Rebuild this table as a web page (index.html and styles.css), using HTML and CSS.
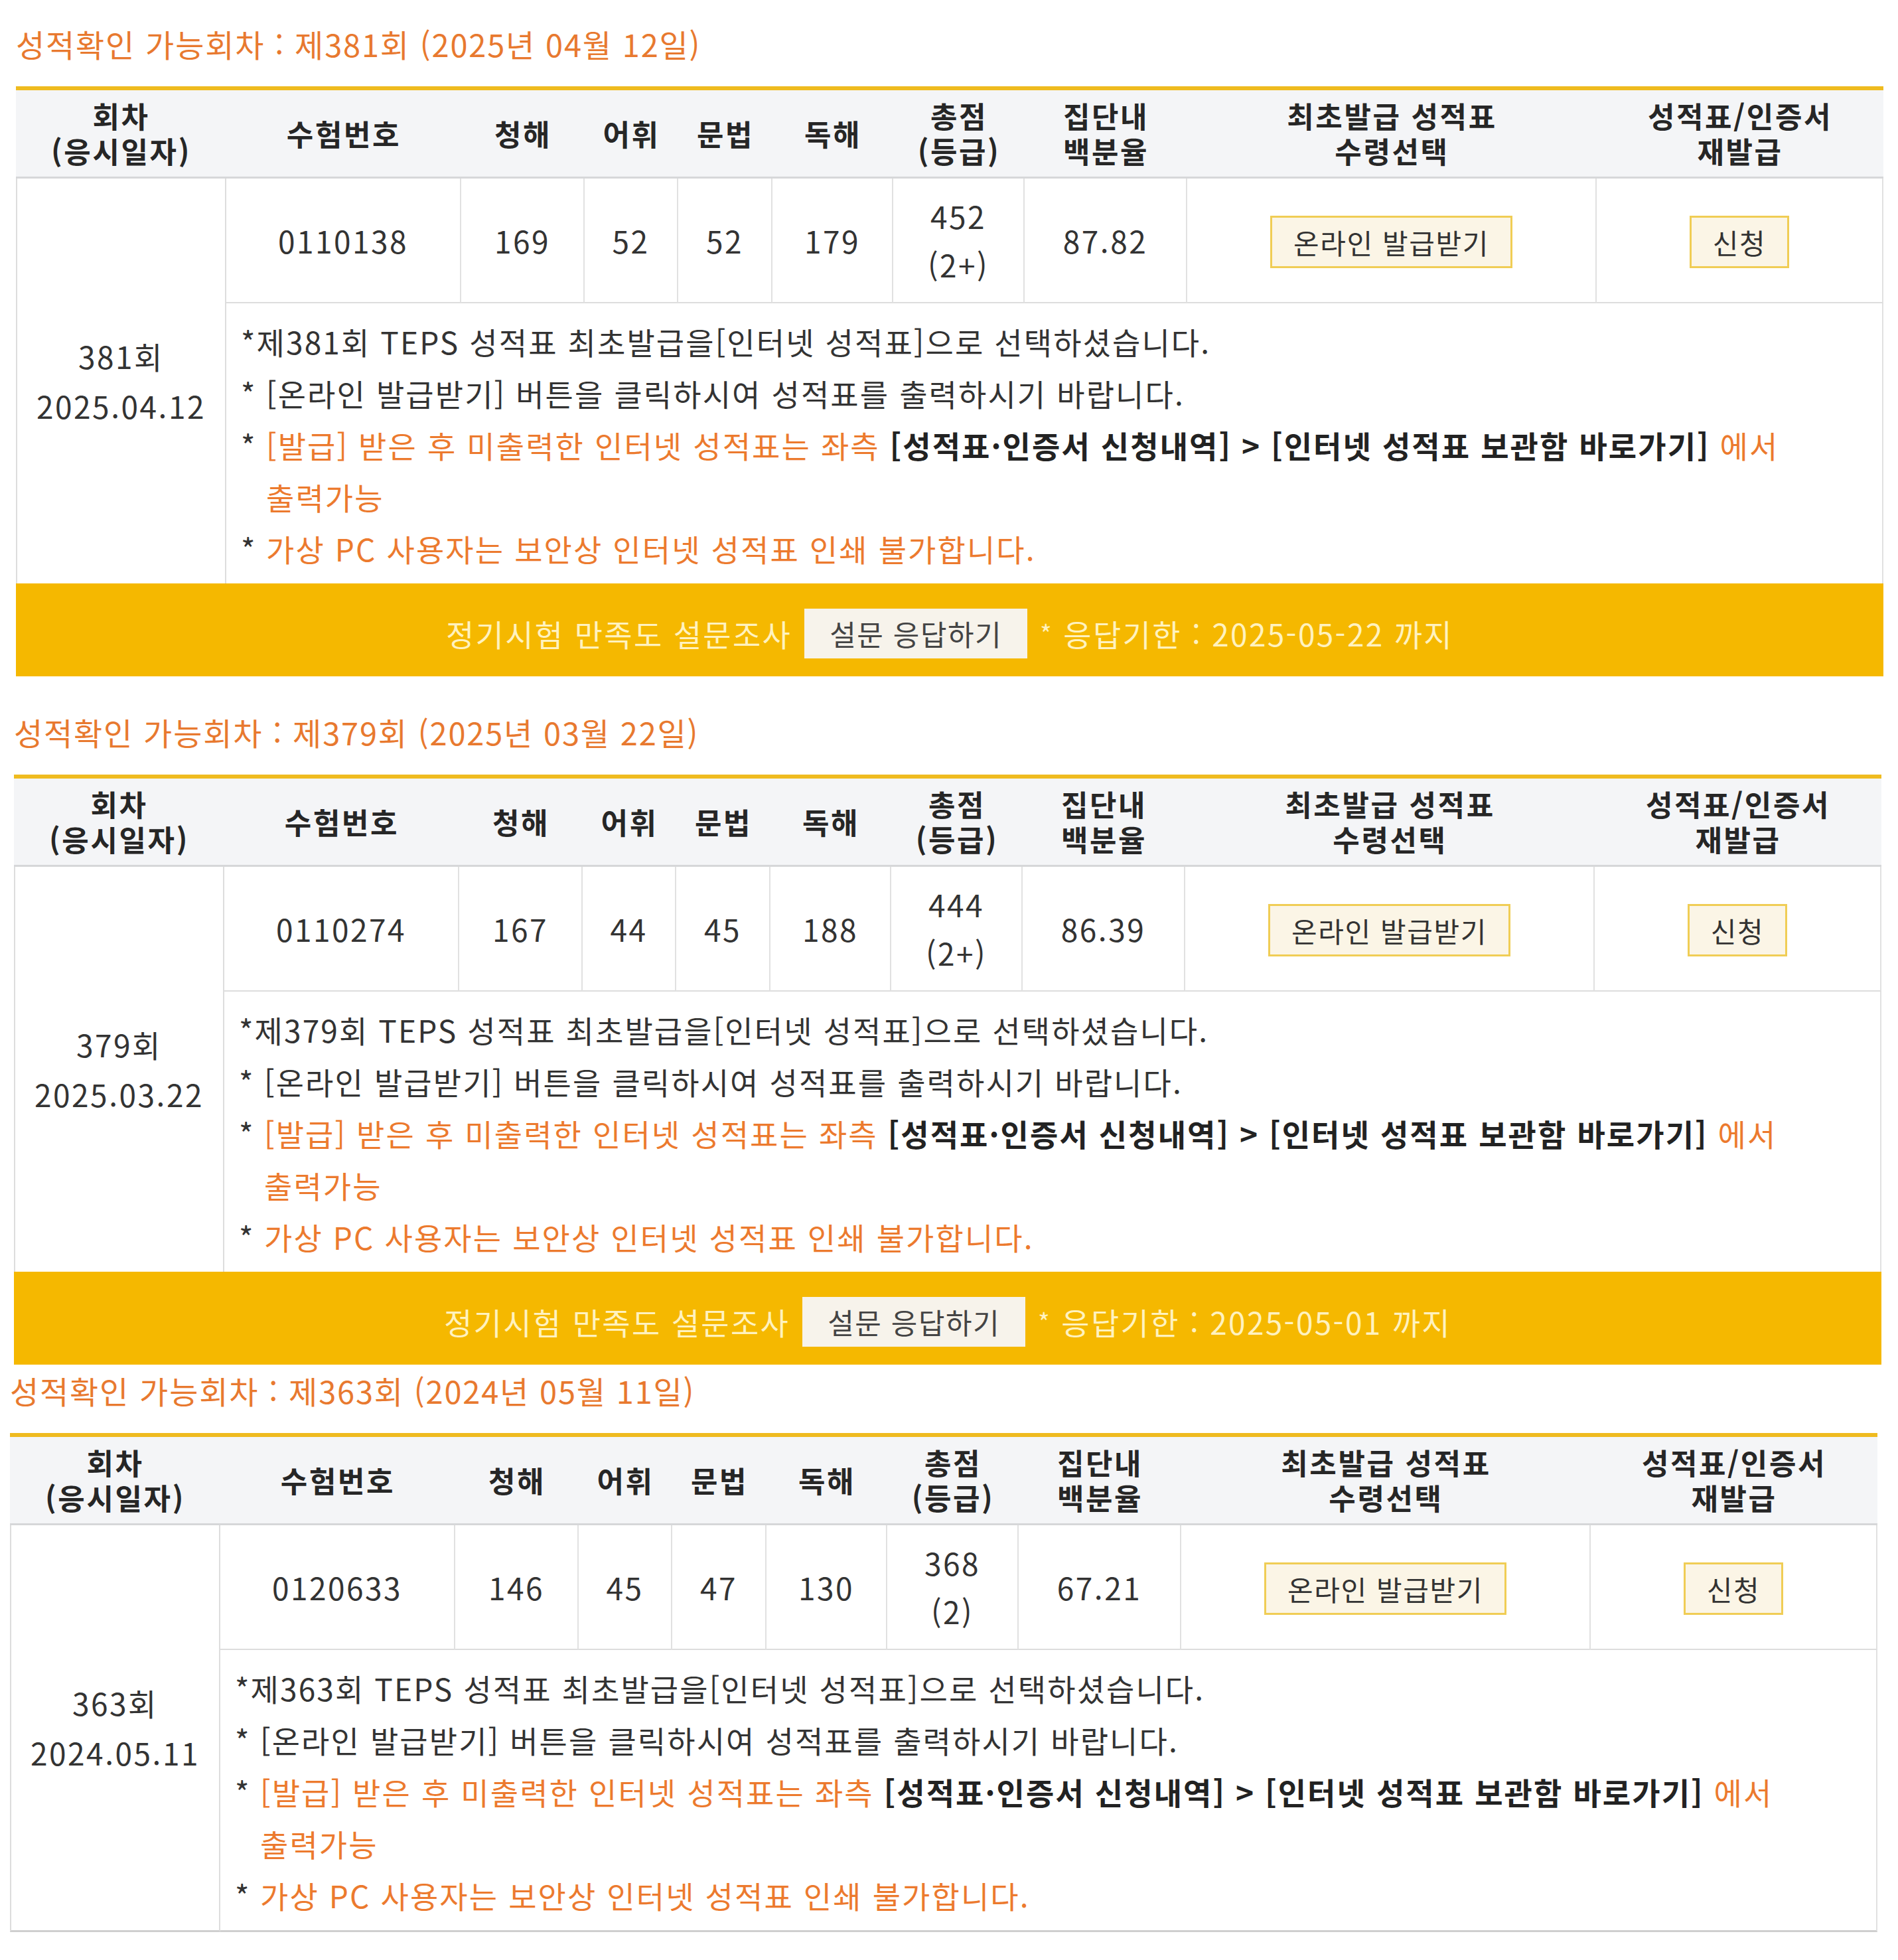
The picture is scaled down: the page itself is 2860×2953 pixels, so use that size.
FILE: index.html
```html
<!DOCTYPE html>
<html lang="ko">
<head>
<meta charset="utf-8">
<title>성적확인</title>
<link rel="stylesheet" href="styles.css">
</head>
<body>
<main class="page">

<section class="exam exam-1">
  <h2 class="exam-title">성적확인 가능회차 : 제381회 (2025년 04월 12일)</h2>
  <table class="score">
    <colgroup>
      <col class="c-round"><col class="c-no"><col class="c-lc"><col class="c-vo"><col class="c-gr"><col class="c-rc"><col class="c-total"><col class="c-pct"><col class="c-issue"><col class="c-re">
    </colgroup>
    <thead>
      <tr>
        <th>회차<br>(응시일자)</th>
        <th>수험번호</th>
        <th>청해</th>
        <th>어휘</th>
        <th>문법</th>
        <th>독해</th>
        <th>총점<br>(등급)</th>
        <th>집단내<br>백분율</th>
        <th>최초발급 성적표<br>수령선택</th>
        <th>성적표/인증서<br>재발급</th>
      </tr>
    </thead>
    <tbody>
      <tr class="data">
        <td rowspan="2" class="round">381회<br>2025.04.12</td>
        <td class="num">0110138</td>
        <td class="num">169</td>
        <td class="num">52</td>
        <td class="num">52</td>
        <td class="num">179</td>
        <td class="num">452<br>(2+)</td>
        <td class="num">87.82</td>
        <td><button class="btn">온라인 발급받기</button></td>
        <td class="last"><button class="btn">신청</button></td>
      </tr>
      <tr>
        <td colspan="9" class="notes">
          <ul class="note-list">
            <li><span class="mark mark-tight">*</span>제381회 TEPS 성적표 최초발급을[인터넷 성적표]으로 선택하셨습니다.</li>
            <li><span class="mark">*</span>[온라인 발급받기] 버튼을 클릭하시여 성적표를 출력하시기 바랍니다.</li>
            <li><span class="mark">*</span><span class="orange">[발급] 받은 후 미출력한 인터넷 성적표는 좌측 </span><span class="strong">[성적표·인증서 신청내역] &gt; [인터넷 성적표 보관함 바로가기]</span><span class="orange"> 에서<br>출력가능</span></li>
            <li><span class="mark">*</span><span class="orange">가상 PC 사용자는 보안상 인터넷 성적표 인쇄 불가합니다.</span></li>
          </ul>
        </td>
      </tr>
    </tbody>
  </table>
  <div class="survey">
    <span>정기시험 만족도 설문조사</span>
    <button class="survey-btn">설문 응답하기</button>
    <span><span class="star">*</span> 응답기한 : 2025-05-22 까지</span>
  </div>
</section>

<section class="exam exam-2">
  <h2 class="exam-title">성적확인 가능회차 : 제379회 (2025년 03월 22일)</h2>
  <table class="score">
    <colgroup>
      <col class="c-round"><col class="c-no"><col class="c-lc"><col class="c-vo"><col class="c-gr"><col class="c-rc"><col class="c-total"><col class="c-pct"><col class="c-issue"><col class="c-re">
    </colgroup>
    <thead>
      <tr>
        <th>회차<br>(응시일자)</th>
        <th>수험번호</th>
        <th>청해</th>
        <th>어휘</th>
        <th>문법</th>
        <th>독해</th>
        <th>총점<br>(등급)</th>
        <th>집단내<br>백분율</th>
        <th>최초발급 성적표<br>수령선택</th>
        <th>성적표/인증서<br>재발급</th>
      </tr>
    </thead>
    <tbody>
      <tr class="data">
        <td rowspan="2" class="round">379회<br>2025.03.22</td>
        <td class="num">0110274</td>
        <td class="num">167</td>
        <td class="num">44</td>
        <td class="num">45</td>
        <td class="num">188</td>
        <td class="num">444<br>(2+)</td>
        <td class="num">86.39</td>
        <td><button class="btn">온라인 발급받기</button></td>
        <td class="last"><button class="btn">신청</button></td>
      </tr>
      <tr>
        <td colspan="9" class="notes">
          <ul class="note-list">
            <li><span class="mark mark-tight">*</span>제379회 TEPS 성적표 최초발급을[인터넷 성적표]으로 선택하셨습니다.</li>
            <li><span class="mark">*</span>[온라인 발급받기] 버튼을 클릭하시여 성적표를 출력하시기 바랍니다.</li>
            <li><span class="mark">*</span><span class="orange">[발급] 받은 후 미출력한 인터넷 성적표는 좌측 </span><span class="strong">[성적표·인증서 신청내역] &gt; [인터넷 성적표 보관함 바로가기]</span><span class="orange"> 에서<br>출력가능</span></li>
            <li><span class="mark">*</span><span class="orange">가상 PC 사용자는 보안상 인터넷 성적표 인쇄 불가합니다.</span></li>
          </ul>
        </td>
      </tr>
    </tbody>
  </table>
  <div class="survey">
    <span>정기시험 만족도 설문조사</span>
    <button class="survey-btn">설문 응답하기</button>
    <span><span class="star">*</span> 응답기한 : 2025-05-01 까지</span>
  </div>
</section>

<section class="exam exam-3">
  <h2 class="exam-title">성적확인 가능회차 : 제363회 (2024년 05월 11일)</h2>
  <table class="score">
    <colgroup>
      <col class="c-round"><col class="c-no"><col class="c-lc"><col class="c-vo"><col class="c-gr"><col class="c-rc"><col class="c-total"><col class="c-pct"><col class="c-issue"><col class="c-re">
    </colgroup>
    <thead>
      <tr>
        <th>회차<br>(응시일자)</th>
        <th>수험번호</th>
        <th>청해</th>
        <th>어휘</th>
        <th>문법</th>
        <th>독해</th>
        <th>총점<br>(등급)</th>
        <th>집단내<br>백분율</th>
        <th>최초발급 성적표<br>수령선택</th>
        <th>성적표/인증서<br>재발급</th>
      </tr>
    </thead>
    <tbody>
      <tr class="data">
        <td rowspan="2" class="round">363회<br>2024.05.11</td>
        <td class="num">0120633</td>
        <td class="num">146</td>
        <td class="num">45</td>
        <td class="num">47</td>
        <td class="num">130</td>
        <td class="num">368<br>(2)</td>
        <td class="num">67.21</td>
        <td><button class="btn">온라인 발급받기</button></td>
        <td class="last"><button class="btn">신청</button></td>
      </tr>
      <tr>
        <td colspan="9" class="notes">
          <ul class="note-list">
            <li><span class="mark mark-tight">*</span>제363회 TEPS 성적표 최초발급을[인터넷 성적표]으로 선택하셨습니다.</li>
            <li><span class="mark">*</span>[온라인 발급받기] 버튼을 클릭하시여 성적표를 출력하시기 바랍니다.</li>
            <li><span class="mark">*</span><span class="orange">[발급] 받은 후 미출력한 인터넷 성적표는 좌측 </span><span class="strong">[성적표·인증서 신청내역] &gt; [인터넷 성적표 보관함 바로가기]</span><span class="orange"> 에서<br>출력가능</span></li>
            <li><span class="mark">*</span><span class="orange">가상 PC 사용자는 보안상 인터넷 성적표 인쇄 불가합니다.</span></li>
          </ul>
        </td>
      </tr>
    </tbody>
  </table>
</section>

</main>
</body>
</html>
```

FILE: styles.css
```css
* { box-sizing: border-box; }

html, body {
  margin: 0;
  padding: 0;
  background: #ffffff;
}

body {
  font-family: "Noto Sans CJK KR", "Noto Sans", sans-serif;
  color: #333333;
  width: 2860px;
}

.page {
  padding-top: 34px;
}

.exam {
  width: 2814px;
}

.exam-1 { margin-left: 24px; }
.exam-2 { margin-left: 21px; margin-top: 52px; }
.exam-3 { margin-left: 15px; margin-top: 7px; }

.exam-title {
  margin: 0 0 32px;
  font-size: 47px;
  font-weight: 400;
  line-height: 64px;
  letter-spacing: 1.8px;
  color: #e8792f;
}

.score {
  width: 2814px;
  table-layout: fixed;
  border-collapse: separate;
  border-spacing: 0;
  border-top: 6px solid #efbb1f;
}

.c-round { width: 317px; }
.c-no { width: 354px; }
.c-lc { width: 186px; }
.c-vo { width: 141px; }
.c-gr { width: 142px; }
.c-rc { width: 182px; }
.c-total { width: 198px; }
.c-pct { width: 245px; }
.c-issue { width: 617px; }
.c-re { width: 432px; }

.score th {
  background: #f4f5f7;
  font-size: 44px;
  font-weight: 700;
  color: #262626;
  line-height: 53px;
  letter-spacing: 2.6px;
  padding: 12px 0;
  border-bottom: 3px solid #d6d7d9;
  text-align: center;
  vertical-align: middle;
  white-space: nowrap;
}

.score td {
  font-size: 46px;
  color: #333333;
  text-align: center;
  vertical-align: middle;
  border-right: 2px solid #e1e1e1;
}

.data td {
  padding: 20px 0;
  line-height: 73px;
  border-bottom: 2px solid #dddddd;
}

.data td.num {
  letter-spacing: 2.5px;
}

.score td.round {
  line-height: 75px;
  border-left: 2px solid #dddddd;
  border-bottom: 0;
  border-right: 2px solid #dddddd;
  padding: 0;
  letter-spacing: 2.5px;
}

.btn {
  display: inline-block;
  vertical-align: middle;
  font-family: inherit;
  font-size: 42px;
  line-height: 57px;
  letter-spacing: 1.6px;
  padding: 8px 32px;
  border: 3px solid #f0cd55;
  background: #fbf5e6;
  color: #333333;
  cursor: pointer;
}

.score td.notes {
  padding: 18px 22px 14px;
  text-align: left;
  line-height: 78px;
  letter-spacing: 2.1px;
  vertical-align: top;
}

.note-list {
  list-style: none;
  margin: 0;
  padding: 0;
}

.note-list li {
  padding-left: 38px;
  text-indent: -38px;
}

.mark {
  display: inline-block;
  width: 38px;
  text-indent: 0;
  color: #333333;
}

.mark-tight {
  width: auto;
}

.orange {
  color: #ec7a2e;
}

.strong {
  font-weight: 700;
  color: #222222;
}

.survey {
  display: flex;
  justify-content: center;
  align-items: center;
  gap: 19px;
  height: 140px;
  padding-top: 10px;
  background: #f5b800;
  color: #fff2bf;
  font-size: 46px;
  line-height: 60px;
  letter-spacing: 2.3px;
}

.survey-btn {
  font-family: inherit;
  font-size: 43px;
  line-height: 57px;
  letter-spacing: 1.5px;
  padding: 9px 38px;
  background: #f7f3eb;
  color: #444444;
  border: 0;
  cursor: pointer;
}

.star {
  display: inline-block;
  font-size: 38px;
  vertical-align: 4px;
}

.exam-3 .score td.notes,
.exam-3 .score td.round {
  border-bottom: 3px solid #cfcfcf;
}
```
